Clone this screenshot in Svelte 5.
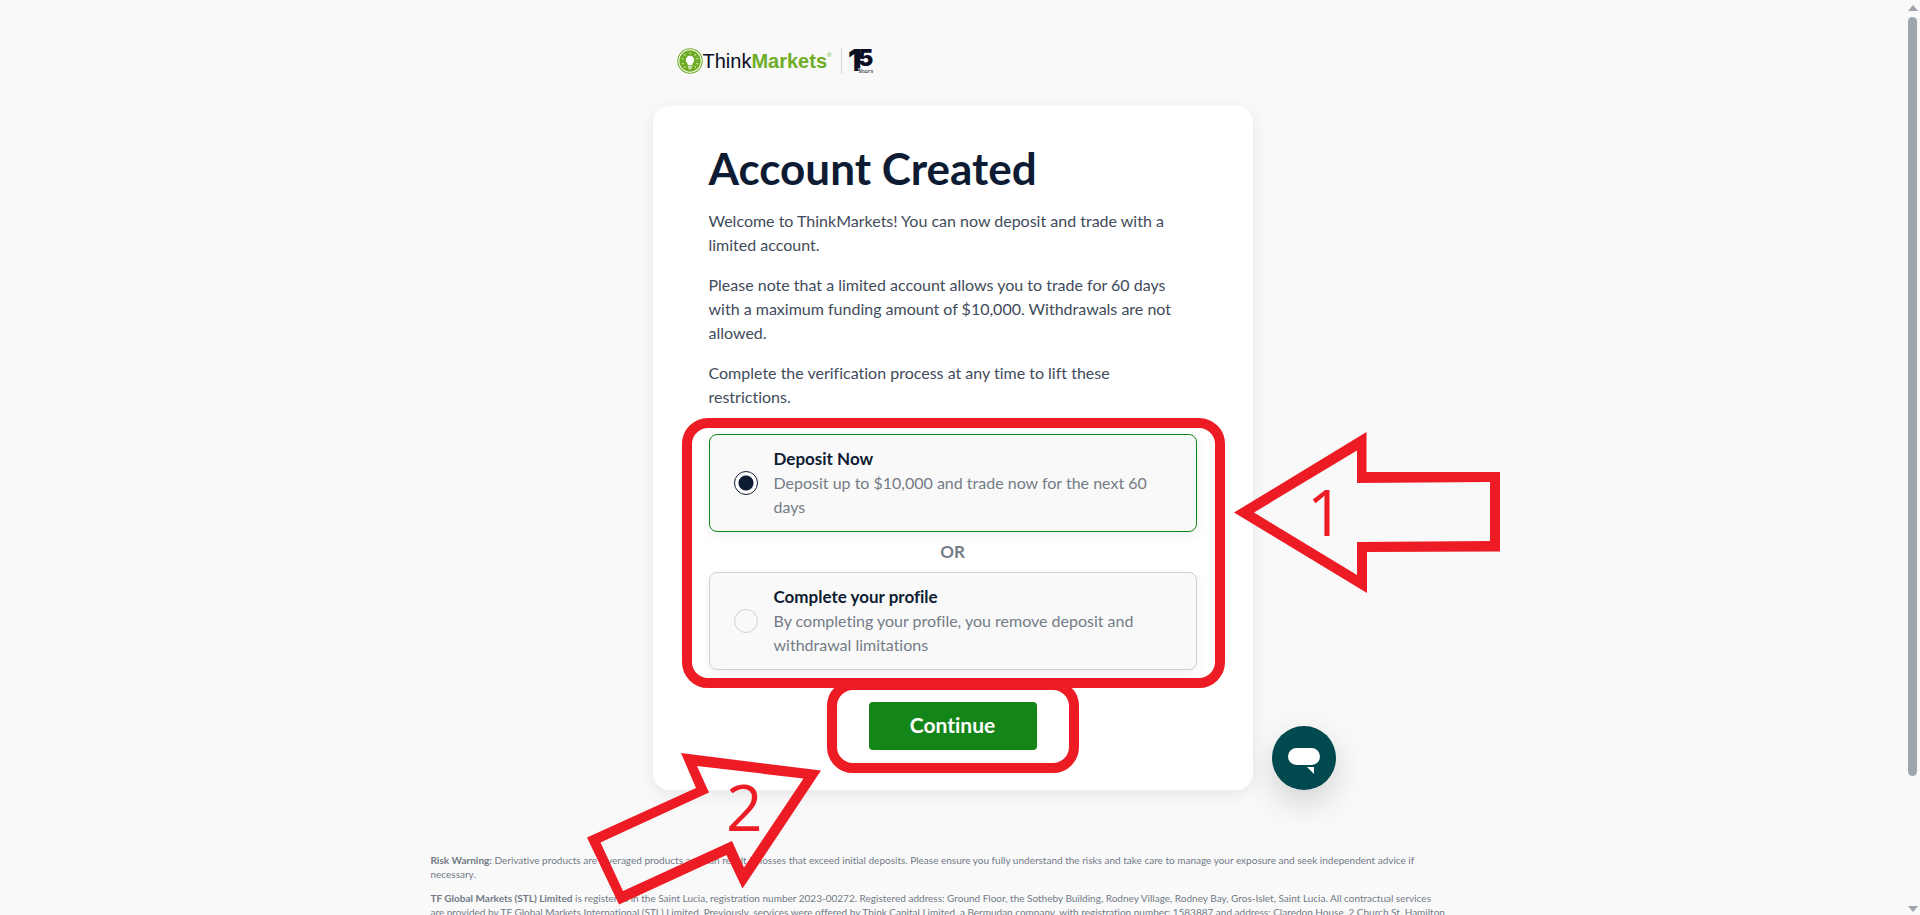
<script lang="ts">
  let choice = $state('deposit');

  const options = [
    {
      value: 'deposit',
      title: 'Deposit Now',
      text: 'Deposit up to $10,000 and trade now for the next 60 days',
    },
    {
      value: 'profile',
      title: 'Complete your profile',
      text: 'By completing your profile, you remove deposit and withdrawal limitations',
    },
  ];
</script>

<div class="page">
  <div class="content">
    <header class="brand">
      <a class="logo" href="/" aria-label="ThinkMarkets home">
        <svg class="bulb" viewBox="0 0 50 50" aria-hidden="true">
          <circle cx="25" cy="25" r="23.5" fill="#fff" stroke="#6fac25" stroke-width="2" />
          <circle cx="25" cy="25" r="20.5" fill="#6fac25" />
          <path
            d="M25 15a8 8 0 0 0-8 8c0 4 3.500 6 4 10h8c.5-4 4-6 4-10a8 8 0 0 0-8-8zM21 35h8v2.500h-8zM22.500 39h5v2h-5z"
            fill="#fff"
          />
          <path
            d="M25 8v4M14 12l2 3M36 12l-2 3M9 20l4 1M41 20l-4 1M9 31l4-1M41 31l-4-1M14 38l2-3M36 38l-2-3"
            stroke="#d5e8bd"
            stroke-width="2"
          />
        </svg>
        <span class="wordmark">Think<b>Markets</b></span><span class="reg">®</span>
      </a>
      <svg class="anniversary" viewBox="0 0 24 26" aria-hidden="true">
        <text class="one" x="-2" y="23">1</text>
        <text class="five" x="8" y="18">5</text>
        <text class="years" x="8" y="25">Years</text>
      </svg>
    </header>

    <main class="card">
      <h1>Account Created</h1>
      <p>Welcome to ThinkMarkets! You can now deposit and trade with a limited account.</p>
      <p>
        Please note that a limited account allows you to trade for 60 days with a maximum funding
        amount of $10,000. Withdrawals are not allowed.
      </p>
      <p>Complete the verification process at any time to lift these restrictions.</p>

      <div class="options">
        {#each options as option, i}
          {#if i > 0}
            <div class="or">OR</div>
          {/if}
          <label class="option" class:selected={choice === option.value}>
            <input type="radio" name="next-step" value={option.value} bind:group={choice} />
            <span class="option-body">
              <strong>{option.title}</strong>
              <span class="option-text">{option.text}</span>
            </span>
          </label>
        {/each}
        <div class="frame options-frame"></div>
      </div>

      <div class="actions">
        <button class="continue" type="button">Continue</button>
        <div class="frame continue-frame"></div>
      </div>

      <svg class="arrow arrow-one" viewBox="0 0 266 162" aria-hidden="true">
        <path
          fill-rule="evenodd"
          d="M0 80.500 132.500 0V40L266 40V119.500L133 120V161ZM20 80.500 123 143V110L256 109V50L123 51V18.500Z"
        />
        <text x="73" y="104">1</text>
      </svg>
      <svg class="arrow arrow-two" viewBox="0 0 234 152" aria-hidden="true">
        <path
          fill-rule="evenodd"
          d="M94 0 234 17.500 155.500 135.500 139.500 102 32 151.500 0 84.500 109 35ZM110 13 122 39.500 13.500 89.500 36 138 145 88 157 114.500 216.500 25.500Z"
        />
        <text x="139" y="78">2</text>
      </svg>

      <button class="chat" type="button" aria-label="Open chat">
        <svg viewBox="0 0 64 64" aria-hidden="true">
          <rect x="16" y="22" width="32" height="17" rx="8.500" fill="#fff" />
          <path d="M35 41h7v7z" fill="#fff" />
        </svg>
      </button>
    </main>

    <footer class="legal">
      <p>
        <b>Risk Warning:</b> Derivative products are leveraged products and can result in losses that
        exceed initial deposits. Please ensure you fully understand the risks and take care to manage
        your exposure and seek independent advice if<br />necessary.
      </p>
      <p>
        <b>TF Global Markets (STL) Limited</b> is registered in the Saint Lucia, registration number
        2023-00272. Registered address: Ground Floor, the Sotheby Building, Rodney Village, Rodney
        Bay, Gros-Islet, Saint Lucia. All contractual services<br />are provided by TF Global Markets
        International (STL) Limited. Previously, services were offered by Think Capital Limited, a
        Bermudan company, with registration number: 1583887 and address: Claredon House, 2 Church St,
        Hamilton
      </p>
    </footer>
  </div>

  <div class="scrollbar" aria-hidden="true">
    <svg viewBox="0 0 10 6"><path d="M0 6 5 0l5 6z" /></svg>
    <div class="track"><div class="thumb"></div></div>
    <svg viewBox="0 0 10 6"><path d="M0 0l5 6 5-6z" /></svg>
  </div>
</div>

<style>
  :global(body) {
    background: #f9f9f9;
  }

  .page {
    display: grid;
    grid-template-columns: minmax(0, 1fr) 15px;
    height: 100vh;
    overflow: hidden;
    background: #f9f9f9;
    color: #414b5a;
    font-family: Lato, 'Open Sans', sans-serif;
    font-size: 16px;
    font-variant-ligatures: none;
    line-height: 24px;
  }

  .content {
    display: flex;
    flex-direction: column;
    align-items: center;
    min-height: 0;
    overflow: hidden;
  }

  .content > * {
    flex: none;
    box-sizing: border-box;
  }

  .brand {
    display: flex;
    align-items: center;
    gap: 8px;
    width: 100%;
    max-width: 600px;
    height: 106px;
    padding: 16px 24px 0;
  }

  .logo {
    display: flex;
    align-items: center;
    padding-right: 10px;
    border-right: 1px solid #d3d5dc;
    color: #0a0f24;
    font-family: 'Liberation Sans', Arial, sans-serif;
    font-size: 20px;
    text-decoration: none;
  }

  .bulb {
    width: 26px;
    height: 26px;
  }

  .wordmark b {
    color: #6fac25;
  }

  .reg {
    align-self: flex-start;
    color: #6fac25;
    font-size: 6px;
    line-height: 14px;
  }

  .anniversary {
    width: 24px;
    height: 26px;
    overflow: visible;
    fill: #0a0f24;
  }

  .one {
    font: 900 30px Inter, sans-serif;
  }

  .five {
    font: 900 23px Inter, sans-serif;
  }

  .years {
    font: italic 7px 'Liberation Serif', serif;
    stroke: #f9f9f9;
    stroke-width: 1px;
    paint-order: stroke;
  }

  .card {
    position: relative;
    width: 100%;
    max-width: 600px;
    padding: 36px 56px 40px;
    border-radius: 16px;
    background: #fff;
    box-shadow: 0 4px 16px rgba(0, 0, 0, 0.08);
  }

  h1 {
    margin: 0 0 15px;
    color: #0e1c33;
    font-size: 44px;
    font-weight: 700;
    line-height: 52px;
  }

  .card p {
    margin: 0 0 16px;
    padding-right: 8px;
  }

  .options {
    position: relative;
    margin-top: 25px;
  }

  .option {
    display: flex;
    align-items: center;
    gap: 16px;
    padding: 12px 24px;
    border: 1px solid #ced0d6;
    border-radius: 8px;
    background: #f9f9f9;
    box-shadow: 0 4px 12px rgba(0, 0, 0, 0.06);
    cursor: pointer;
  }

  .option.selected {
    border-color: #148519;
  }

  .option input {
    flex: none;
    appearance: none;
    width: 24px;
    height: 24px;
    margin: 0;
    border: 1px solid #ced0d6;
    border-radius: 50%;
  }

  .option input:checked {
    border-color: #0e1c33;
    background: radial-gradient(circle, #0e1c33 7px, #fff 8px);
  }

  .option-body {
    display: flex;
    flex-direction: column;
    padding-right: 16px;
  }

  .option strong {
    color: #0e1c33;
    font-size: 17px;
  }

  .option-text,
  .or {
    color: #747c87;
  }

  .or {
    padding: 8px 0;
    font-size: 17px;
    font-weight: 700;
    text-align: center;
  }

  .actions {
    position: relative;
    width: 168px;
    margin: 32px auto 0;
  }

  .continue {
    display: block;
    width: 100%;
    height: 48px;
    padding: 0 0 2px;
    border: 0;
    border-radius: 4px;
    background: #148519;
    color: #fff;
    font: inherit;
    font-size: 21px;
    font-weight: 700;
    cursor: pointer;
  }

  .frame {
    position: absolute;
    border: 10px solid #ed1c24;
    border-radius: 26px;
    pointer-events: none;
  }

  .options-frame {
    inset: -16px -28px -18px -27px;
  }

  .continue-frame {
    inset: -22px -42px -23px;
  }

  .arrow {
    position: absolute;
    overflow: visible;
    fill: #ed1c24;
    pointer-events: none;
  }

  .arrow text {
    font: 400 64px 'Open Sans', sans-serif;
  }

  .arrow-one {
    top: 326px;
    left: 581px;
    width: 266px;
    height: 162px;
  }

  .arrow-two {
    top: 647px;
    left: -66px;
    width: 234px;
    height: 152px;
  }

  .chat {
    position: absolute;
    bottom: 0;
    left: 619px;
    width: 64px;
    height: 64px;
    padding: 0;
    border: 0;
    border-radius: 50%;
    background: #00494f;
    box-shadow: 0 12px 32px rgba(0, 0, 0, 0.16);
    cursor: pointer;
  }

  .chat svg {
    display: block;
  }

  .legal {
    width: 100%;
    max-width: 1044px;
    padding-top: 63px;
    color: #717a86;
    font-size: 10px;
    line-height: 14px;
  }

  .legal p {
    margin: 0 0 10px;
  }

  .scrollbar {
    display: flex;
    flex-direction: column;
    align-items: center;
    gap: 6px;
    padding: 5px 0 3px;
  }

  .scrollbar svg {
    flex: none;
    width: 10px;
    height: 6px;
    fill: #9ea5ad;
  }

  .track {
    flex: 1;
    width: 9px;
  }

  .thumb {
    height: 86%;
    border-radius: 5px;
    background: #9ea5ad;
  }
</style>
